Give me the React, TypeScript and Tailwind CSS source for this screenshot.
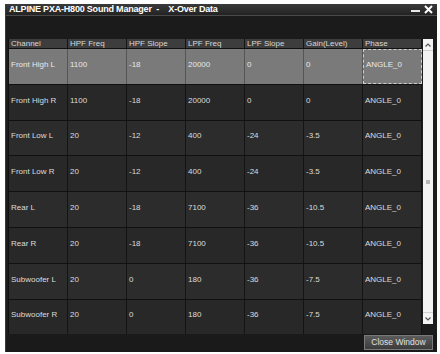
import React from 'react';

const columns = ['Channel', 'HPF Freq', 'HPF Slope', 'LPF Freq', 'LPF Slope', 'Gain(Level)', 'Phase'];

const rows = [
  ['Front High L', '1100', '-18', '20000', '0', '0', 'ANGLE_0'],
  ['Front High R', '1100', '-18', '20000', '0', '0', 'ANGLE_0'],
  ['Front Low L', '20', '-12', '400', '-24', '-3.5', 'ANGLE_0'],
  ['Front Low R', '20', '-12', '400', '-24', '-3.5', 'ANGLE_0'],
  ['Rear L', '20', '-18', '7100', '-36', '-10.5', 'ANGLE_0'],
  ['Rear R', '20', '-18', '7100', '-36', '-10.5', 'ANGLE_0'],
  ['Subwoofer L', '20', '0', '180', '-36', '-7.5', 'ANGLE_0'],
  ['Subwoofer R', '20', '0', '180', '-36', '-7.5', 'ANGLE_0'],
];

export default function App() {
  return (
    <div className="w-[440px] h-[354px] bg-white pt-[4px] pl-[5px] font-['Liberation_Sans',Arial,sans-serif]">
      <div className="w-[432px] h-[348px] bg-[#1c1c1c] flex flex-col border-l border-[#3a3a3a]">
        {/* Title bar */}
        <div className="h-[12px] flex items-center justify-between pl-[3px] pr-[4px] bg-gradient-to-b from-[#3a3a3a] to-[#232323] border-b border-[#4a4a4a]">
          <span className="text-[9px] leading-none font-bold text-white tracking-[-0.2px] whitespace-pre">
            ALPINE PXA-H800 Sound Manager  -    X-Over Data
          </span>
          <div className="flex items-center gap-[4px] text-white">
            <svg width="9" height="9" viewBox="0 0 9 9">
              <rect x="0" y="5" width="9" height="2" fill="#e8e8e8" />
            </svg>
            <svg width="9" height="9" viewBox="0 0 9 9">
              <path d="M1 1 L8 8 M8 1 L1 8" stroke="#ffffff" strokeWidth="2" />
            </svg>
          </div>
        </div>

        {/* empty band */}
        <div className="h-[23px] bg-[#1b1b1b]" />

        {/* grid + scrollbar */}
        <div className="flex items-start pl-[2px]">
          <div className="w-[414px] text-[8px] text-[#dcdcdc]">
            <div className="flex h-[9px] bg-[#3d3d3d] border-l border-[#111]">
              {columns.map((c) => (
                <div key={c} className="w-[59px] pl-[2px] leading-[9px] border-r border-[#141414] text-[#d8d8d8] truncate">
                  {c}
                </div>
              ))}
            </div>
            {rows.map((r, i) => (
              <div
                key={r[0]}
                className={
                  i === 0
                    ? 'flex h-[35.8px] bg-[#7a7a7a] border-l border-[#111] border-t border-[#5a5a5a]'
                    : i % 2 === 1
                    ? 'flex h-[35.8px] bg-[#282828] border-l border-[#111] border-t border-[#1a1a1a]'
                    : 'flex h-[35.8px] bg-[#2c2c2c] border-l border-[#111] border-t border-[#1a1a1a]'
                }
              >
                {r.map((v, j) => (
                  <div
                    key={j}
                    className={
                      i === 0 && j === 6
                        ? 'w-[59px] pl-[2px] pb-[3px] flex items-center border border-dashed border-[#cfcfcf] text-[#e8e8e8]'
                        : i === 0
                        ? 'w-[59px] pl-[2px] pb-[3px] flex items-center border-r border-[#555] text-[#e8e8e8]'
                        : 'w-[59px] pl-[2px] pb-[3px] flex items-center border-r border-[#141414]'
                    }
                  >
                    {v}
                  </div>
                ))}
              </div>
            ))}
          </div>

          {/* scrollbar */}
          <div className="w-[10px] h-[285px] bg-[#f3f3f3] flex flex-col items-center ml-[1px]">
            <div className="h-[12px] w-full flex items-center justify-center border-b border-[#d0d0d0]">
              <svg width="6" height="4" viewBox="0 0 6 4">
                <path d="M0.5 3.5 L3 1 L5.5 3.5" stroke="#555" strokeWidth="1.2" fill="none" />
              </svg>
            </div>
            <div className="flex-1 w-full flex items-center justify-center">
              <div className="w-[4px] h-[4px] bg-[#b8b8b8]" />
            </div>
            <div className="h-[12px] w-full flex items-center justify-center border-t border-[#d0d0d0]">
              <svg width="6" height="4" viewBox="0 0 6 4">
                <path d="M0.5 0.5 L3 3 L5.5 0.5" stroke="#555" strokeWidth="1.2" fill="none" />
              </svg>
            </div>
          </div>
        </div>

        {/* footer */}
        <div className="flex-1 flex justify-end items-end pr-[4px] pb-[2px] bg-[#1a1a1a]">
          <button className="w-[69px] h-[15px] bg-gradient-to-b from-[#5c5c5c] to-[#3c3c3c] border border-[#7a7a7a] text-[8.5px] text-[#e0e0e0] leading-none">
            Close Window
          </button>
        </div>
      </div>
    </div>
  );
}
